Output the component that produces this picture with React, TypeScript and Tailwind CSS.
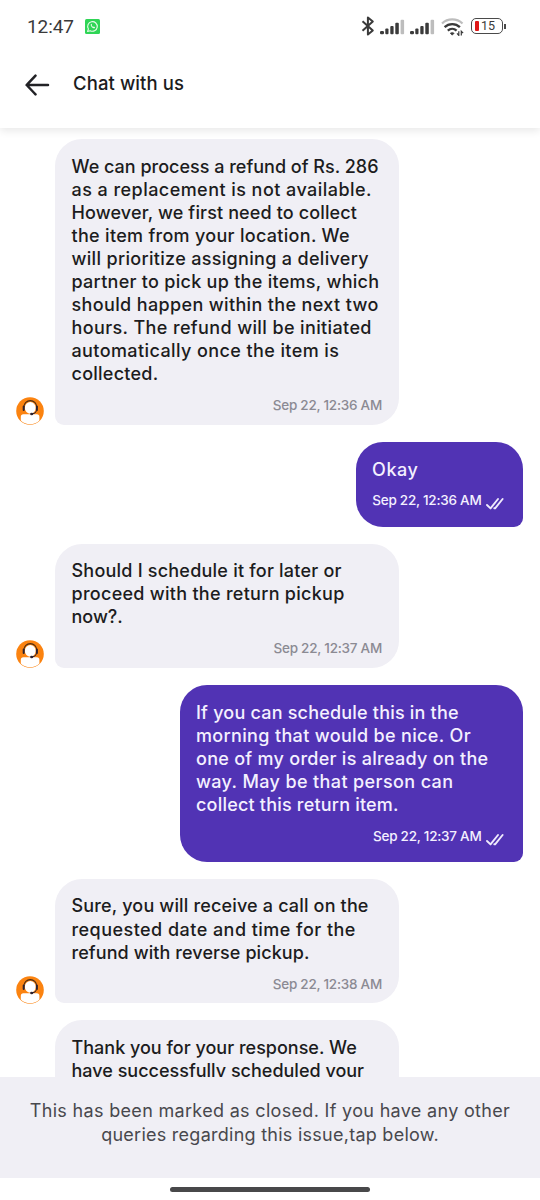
type Line = {
  text: string;
  tracking?: string;
};

type Message = {
  id: number;
  mine: boolean;
  time?: string;
  lines: Line[];
};

const messages: Message[] = [
  {
    id: 1,
    mine: false,
    time: 'Sep 22, 12:36 AM',
    lines: [
      { text: 'We can process a refund of Rs. 286' },
      { text: 'as a replacement is not available.', tracking: 'tracking-[0.45px]' },
      { text: 'However, we first need to collect', tracking: 'tracking-[0.13px]' },
      { text: 'the item from your location. We', tracking: 'tracking-[0.3px]' },
      { text: 'will prioritize assigning a delivery', tracking: 'tracking-[0.32px]' },
      { text: 'partner to pick up the items, which', tracking: 'tracking-[0.28px]' },
      { text: 'should happen within the next two', tracking: 'tracking-[0.36px]' },
      { text: 'hours. The refund will be initiated', tracking: 'tracking-[0.38px]' },
      { text: 'automatically once the item is', tracking: 'tracking-[0.4px]' },
      { text: 'collected.', tracking: 'tracking-[0.25px]' },
    ],
  },
  {
    id: 2,
    mine: true,
    time: 'Sep 22, 12:36 AM',
    lines: [{ text: 'Okay', tracking: 'tracking-[0.6px]' }],
  },
  {
    id: 3,
    mine: false,
    time: 'Sep 22, 12:37 AM',
    lines: [
      { text: 'Should I schedule it for later or', tracking: 'tracking-[0.22px]' },
      { text: 'proceed with the return pickup', tracking: 'tracking-[0.28px]' },
      { text: 'now?.' },
    ],
  },
  {
    id: 4,
    mine: true,
    time: 'Sep 22, 12:37 AM',
    lines: [
      { text: 'If you can schedule this in the', tracking: 'tracking-[0.2px]' },
      { text: 'morning that would be nice. Or', tracking: 'tracking-[0.34px]' },
      { text: 'one of my order is already on the', tracking: 'tracking-[0.28px]' },
      { text: 'way. May be that person can', tracking: 'tracking-[0.38px]' },
      { text: 'collect this return item.', tracking: 'tracking-[0.2px]' },
    ],
  },
  {
    id: 5,
    mine: false,
    time: 'Sep 22, 12:38 AM',
    lines: [
      { text: 'Sure, you will receive a call on the', tracking: 'tracking-[0.16px]' },
      { text: 'requested date and time for the', tracking: 'tracking-[0.46px]' },
      { text: 'refund with reverse pickup.', tracking: 'tracking-[0.08px]' },
    ],
  },
  {
    id: 6,
    mine: false,
    lines: [{ text: 'Thank you for your response. We' }, { text: 'have successfully scheduled your' }],
  },
];

function Signal() {
  return (
    <svg width="25" height="16" viewBox="0 0 25 16" fill="#3a3a3a">
      <rect x="0" y="12" width="4" height="3.3" rx="1.2" />
      <rect x="5.3" y="9.6" width="3.2" height="5.7" rx="1" />
      <rect x="10.3" y="7" width="3.3" height="8.3" rx="1" />
      <rect x="15.3" y="3.7" width="3.5" height="11.6" rx="1" />
      <rect x="20.6" y="0.7" width="3.5" height="14.6" rx="1" fill="#bdbdbd" />
    </svg>
  );
}

function StatusBar() {
  return (
    <div className="z-20 flex h-[52px] shrink-0 items-center bg-white pr-[34px] pl-[27px]">
      <span className="mt-[2px] font-[Roboto] text-[19px] tracking-[-0.1px] text-[#3a3a3a]">12:47</span>
      <svg className="ml-[11px]" width="15" height="15" viewBox="0 0 15 15">
        <rect width="15" height="15" rx="1.5" fill="#2fd556" />
        <path
          d="M2.6 12.5l.8-2.5a4.8 4.8 0 1 1 1.8 1.7z"
          fill="none"
          stroke="#e9fbe9"
          strokeWidth="1.1"
          strokeLinejoin="round"
        />
        <path d="M5.8 5.2c-.5 2 2 4.4 3.8 4l.5-1-1.3-.7-.7.6-1.5-1.5.5-.7-.6-1.2z" fill="#e9fbe9" />
      </svg>
      <div className="ml-auto flex items-center">
        <svg width="14" height="20" viewBox="0 0 14 20" fill="none" stroke="#3a3a3a" strokeWidth="2">
          <path d="M1.5 5.2l10.3 9.2-4.9 4.1V1.5l4.9 4.1L1.5 14.8" strokeLinejoin="round" />
        </svg>
        <div className="mt-[2px] ml-[5px]">
          <Signal />
        </div>
        <div className="mt-[2px] ml-[5px]">
          <Signal />
        </div>
        <svg className="mt-[1px] ml-[6px]" width="23" height="18" viewBox="0 0 23 18" fill="none" strokeWidth="2.3">
          <path d="M1 5.5a15 15 0 0 1 20.5 0" stroke="#bdbdbd" />
          <path d="M3.6 9.2a11 11 0 0 1 15.3 0" stroke="#3a3a3a" />
          <path d="M6.8 12.6a6.6 6.6 0 0 1 8.8 0" stroke="#3a3a3a" />
          <path d="M9.2 15.2a3.4 3.4 0 0 1 4 0l-2 2z" fill="#3a3a3a" stroke="#3a3a3a" strokeWidth="0.6" />
          <path d="M17.8 13.2v4.2l-1.8-2M20.3 17.4v-4.2l1.8 2" stroke="#3a3a3a" strokeWidth="1.2" />
        </svg>
        <div className="ml-[7px] flex h-[16px] w-[32px] items-center rounded-[5px] border-[1.5px] border-[#4a4a4a] pl-[2.5px]">
          <span className="h-[10px] w-[4px] rounded-[1px] bg-[#e01818]" />
          <span className="ml-[2.5px] font-[Roboto] text-[12.5px] leading-none text-[#3a3a3a]">15</span>
        </div>
        <span className="ml-px h-[5px] w-[2px] bg-[#4a4a4a]" />
      </div>
    </div>
  );
}

function Header() {
  return (
    <header className="z-10 flex h-[76px] shrink-0 items-center bg-white pb-[12px] pl-[25px] shadow-[0_3px_8px_rgba(0,0,0,0.09)]">
      <svg
        className="mt-[2px]"
        width="26"
        height="24"
        viewBox="0 0 26 24"
        fill="none"
        stroke="#222226"
        strokeWidth="2.5"
        strokeLinecap="round"
        strokeLinejoin="round"
      >
        <path d="M23 12H1.8M10.5 2.6Q8.3 5 1.6 12 8.3 19 10.5 21.4" />
      </svg>
      <h1 className="ml-[22px] text-[18.5px] font-medium tracking-[0.09px] text-[#1c1c20]">Chat with us</h1>
    </header>
  );
}

function Avatar() {
  return (
    <svg className="-mb-[0.5px] ml-[16px] shrink-0" width="28" height="28" viewBox="0 0 28 28">
      <circle cx="14" cy="14" r="13.8" fill="#fb8310" />
      <path d="M4.8 23.4V19.8q0-2.6 2.6-2.6h13.4q2.6 0 2.6 2.6v3.6A13.2 13.2 0 0 1 4.8 23.4z" fill="#fff" />
      <path d="M7.8 10.5C7.8 1.3 20.8 1.3 20.8 10.5" fill="none" stroke="#4a2c16" strokeWidth="1.2" />
      <ellipse cx="14.3" cy="10.8" rx="5.5" ry="5.9" fill="#fff" />
      <path d="M7.7 9.5v3.6M20.9 9.5v3.6" stroke="#2c2230" strokeWidth="2" strokeLinecap="round" />
      <path d="M20.7 13.5q-1 3.2-4.7 3.5" fill="none" stroke="#2c2230" strokeWidth="1" />
      <ellipse cx="15.7" cy="17" rx="1.6" ry="1.2" fill="#2c2230" />
    </svg>
  );
}

function Ticks() {
  return (
    <svg
      className="mt-[6px] ml-[4.5px] shrink-0"
      width="18"
      height="13"
      viewBox="0 0 18 13"
      fill="none"
      stroke="#efeafc"
      strokeWidth="1.9"
      strokeLinecap="round"
      strokeLinejoin="round"
    >
      <path d="M1 8l3.5 3.4L12 2M8.3 11.3l.8.1L16.6 2" />
    </svg>
  );
}

function Bubble({ message }: { message: Message }) {
  const { mine, lines, time } = message;

  const text = lines.map((line) => (
    <span key={line.text} className={`block whitespace-nowrap ${line.tracking ?? ''}`}>
      {line.text}
    </span>
  ));

  if (mine) {
    return (
      <div className="flex justify-end pr-[17px]">
        <div
          className={`rounded-[27px] rounded-br-[9px] bg-[#5133b4] px-[16px] pt-[16px] pb-[15.5px] text-[#f4f0ff] ${
            lines.length > 1 ? 'w-[343px]' : 'w-[167px]'
          }`}
        >
          <p className="text-[18px] leading-[23.1px] font-medium">{text}</p>
          <div className="flex h-[30.5px] items-start justify-end pt-[10.5px] pr-[3px]">
            <span className="text-[13.5px] leading-[18px] font-medium tracking-[-0.25px] whitespace-nowrap">
              {time}
            </span>
            <Ticks />
          </div>
        </div>
      </div>
    );
  }

  return (
    <div className="flex items-end">
      <Avatar />
      <div className="ml-[11px] min-h-[124px] w-[344px] rounded-[27px] rounded-bl-[9px] bg-[#f0eff5] px-[17px] pt-[15.5px] pb-[10.5px] text-[#1c1c20]">
        <p className="-ml-[0.5px] text-[18px] leading-[23.1px] font-medium">{text}</p>
        {time && (
          <p className="pt-[11px] text-right text-[13.5px] leading-[18px] font-medium tracking-[-0.25px] text-[#8b8a93]">
            {time}
          </p>
        )}
      </div>
    </div>
  );
}

export default function App() {
  return (
    <div className="flex h-[1200px] w-[540px] flex-col overflow-hidden bg-white font-[Inter,sans-serif]">
      <StatusBar />
      <Header />
      <main className="flex min-h-0 flex-1 flex-col gap-[16.8px] overflow-hidden pt-[11px]">
        {messages.map((message) => (
          <Bubble key={message.id} message={message} />
        ))}
      </main>
      <footer className="h-[101px] shrink-0 bg-[#f0eff5] pt-[22px] text-center text-[18px] leading-[23.5px] text-[#48484d]">
        <p className="tracking-[0.32px]">This has been marked as closed. If you have any other</p>
        <p className="tracking-[0.26px]">queries regarding this issue,tap below.</p>
      </footer>
      <div className="flex h-[22px] shrink-0 items-center justify-center">
        <div className="h-[5px] w-[200px] rounded-full bg-[#48484a]" />
      </div>
    </div>
  );
}
